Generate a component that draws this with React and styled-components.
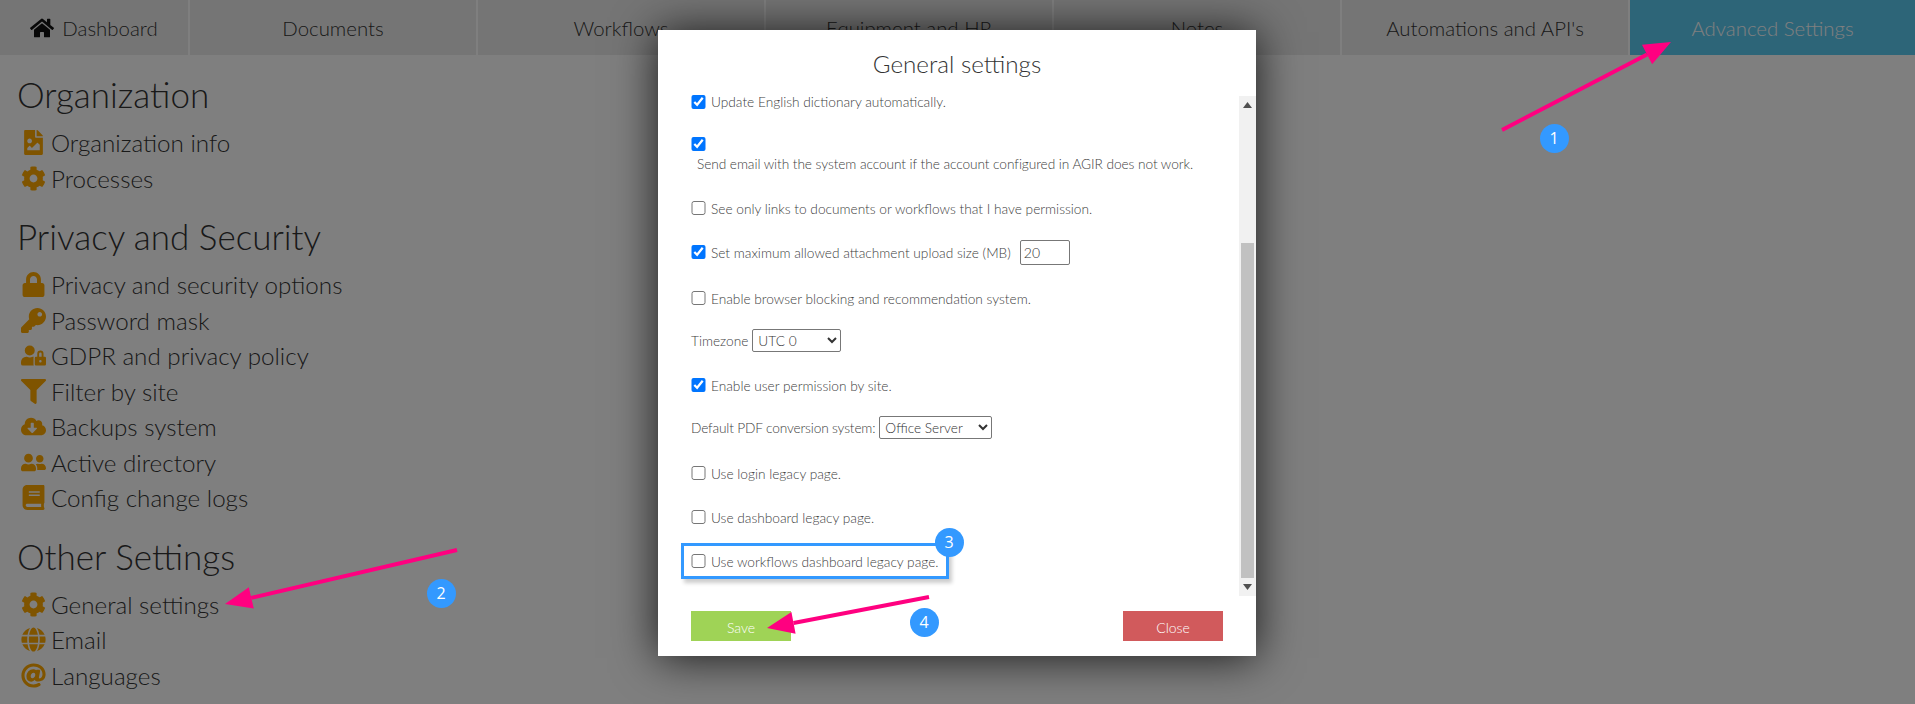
import React from "react";
import styled, { createGlobalStyle } from "styled-components";
import { FaHome, FaFileImage, FaCog, FaLock, FaKey, FaUserLock, FaFilter, FaCloudDownloadAlt, FaUserFriends, FaBook, FaGlobe, FaAt } from "react-icons/fa";

const Global = createGlobalStyle`
  html, body { margin: 0; padding: 0; background: #fff; }
  body { font-family: "Lato", "Open Sans", sans-serif; }
`;
const Page = styled.div`
  position: relative; width: 1915px; height: 704px; overflow: hidden; background: #fff; color: #3c3c3c;
`;
const Nav = styled.nav`
  display: grid; grid-template-columns: 188px repeat(5, 286px) 1fr; column-gap: 2px; height: 55px;
`;
const Tab = styled.a`
  display: flex; align-items: center; justify-content: center; gap: 8px;
  background: ${p => (p.$active ? "#5bcaf1" : "#ebebeb")};
  color: ${p => (p.$active ? "#fff" : "#333")};
  font-size: 20.4px; font-weight: 300;
  svg { font-size: 24px; color: #111; }
`;
const Content = styled.main`padding: 14px 0 0 17px;`;
const Section = styled.section`margin-bottom: 15px;`;
const Heading = styled.h2`
  margin: 0 0 6px; font-size: 35px; line-height: 50px; font-weight: 300; color: #333;
`;
const Item = styled.a`
  display: flex; align-items: center; height: 35.5px; font-size: 24.2px; font-weight: 300; color: #333;
`;
const ItemIcon = styled.span`
  display: flex; justify-content: center; width: 26px; margin: 0 5px 0 3px; color: #ffa800; font-size: 25px; flex: none;
`;
const Overlay = styled.div`position: absolute; inset: 0; background: rgba(0,0,0,.5);`;
const Modal = styled.div`
  position: absolute; left: 658px; top: 30px; width: 598px; height: 626px; background: #fff;
  box-shadow: 0 2px 42px rgba(0,0,0,.8); display: flex; flex-direction: column;
`;
const ModalTitle = styled.h3`
  margin: 0; height: 66px; display: flex; align-items: center; justify-content: center;
  font-size: 24.2px; font-weight: 300; color: #333;
`;
const ScrollArea = styled.div`display: flex; height: 500px;`;
const Viewport = styled.div`flex: 1; padding-left: 33px;`;
const Row = styled.div`
  display: flex; align-items: center; min-height: ${p => p.$h || 44}px;
  font-size: 13.7px; font-weight: 300; color: #404040; margin-top: ${p => p.$mt || 0}px;
  letter-spacing: ${p => p.$ls || 0}px;
`;
const Stack = styled.div`
  display: flex; flex-direction: column; align-items: flex-start; height: 63px; margin-top: 13px; padding-top: 14px; box-sizing: border-box;
  font-size: 13.7px; font-weight: 300; color: #404040; letter-spacing: -0.07px;
`;
const Check = styled.input.attrs({ type: "checkbox" })`
  width: 15px; height: 14px; margin: 0 5px 0 0; flex: none; accent-color: #0075ff;
`;
const Indented = styled.span`margin: 4px 0 0 6px;`;
const NumberField = styled.input`
  width: 50px; height: 25px; box-sizing: border-box; margin-left: 9px; border: 1px solid #777; border-radius: 2px;
  padding: 0 3px; font: 300 14px "Lato", sans-serif; color: #333;
`;
const Select = styled.select`
  width: ${p => p.$w}px; height: 23px; margin-left: 4px; border: 1px solid #777; border-radius: 2px; background: #fff;
  font: 300 13.7px "Lato", sans-serif; color: #333; padding: 0 1px;
`;
const Highlight = styled.div`
  display: flex; align-items: center; box-sizing: border-box; width: 268px; height: 36px; margin-left: -10px; padding-left: 7px;
  border: 3px solid #3399ff; box-shadow: 3px 4px 4px rgba(0,0,0,.2);
`;
const Scrollbar = styled.div`
  width: 17px; flex: none; background: #f1f1f1; display: flex; flex-direction: column; align-items: center;
`;
const ScrollBtn = styled.div`
  height: 17px; flex: none; display: flex; align-items: center; justify-content: center;
`;
const Thumb = styled.div`
  width: 13px; height: 335px; background: #c1c1c1; margin-top: ${p => p.$top}px;
`;
const Footer = styled.footer`
  display: flex; justify-content: space-between; padding: 15px 33px 0;
`;
const Btn = styled.button`
  width: 100px; height: 30px; border: 0; color: #fff; font: 300 14px "Lato", sans-serif;
  background: ${p => p.$bg}; padding: 3px 0 0;
`;
const Annotations = styled.svg`position: absolute; inset: 0; width: 1915px; height: 704px; pointer-events: none;`;
const Badge = styled.span`
  position: absolute; width: 29px; height: 29px; margin: -14.5px 0 0 -14.5px; border-radius: 50%; background: #3399ff; color: #fff;
  display: flex; align-items: center; justify-content: center; font: 400 16px "Open Sans", sans-serif;
`;

function Arrow({ x1, y1, x2, y2 }) {
  const a = Math.atan2(y2 - y1, x2 - x1);
  const len = 27, w = 11;
  const bx = x2 - Math.cos(a) * len, by = y2 - Math.sin(a) * len;
  const nx = -Math.sin(a) * w, ny = Math.cos(a) * w;
  return (
    <g>
      <line x1={x1} y1={y1} x2={bx} y2={by} stroke="#ff0080" strokeWidth="4" />
      <polygon points={`${x2},${y2} ${bx + nx},${by + ny} ${bx - nx},${by - ny}`} fill="#ff0080" />
    </g>
  );
}

const tabs = ["Documents", "Workflows", "Equipment and HR", "Notes", "Automations and API's"];
const sections = [
  { title: "Organization", items: [[FaFileImage, "Organization info"], [FaCog, "Processes"]] },
  { title: "Privacy and Security", items: [[FaLock, "Privacy and security options"], [FaKey, "Password mask"], [FaUserLock, "GDPR and privacy policy"], [FaFilter, "Filter by site"], [FaCloudDownloadAlt, "Backups system"], [FaUserFriends, "Active directory"], [FaBook, "Config change logs"]] },
  { title: "Other Settings", items: [[FaCog, "General settings"], [FaGlobe, "Email"], [FaAt, "Languages"]] },
];

export default function App() {
  return (
    <Page>
      <Global />
      <Nav>
        <Tab><FaHome />Dashboard</Tab>
        {tabs.map(t => <Tab key={t}>{t}</Tab>)}
        <Tab $active>Advanced Settings</Tab>
      </Nav>
      <Content>
        {sections.map(s => (
          <Section key={s.title}>
            <Heading>{s.title}</Heading>
            {s.items.map(([Icon, label]) => (
              <Item key={label}><ItemIcon><Icon /></ItemIcon>{label}</Item>
            ))}
          </Section>
        ))}
      </Content>
      <Overlay />
      <Modal>
        <ModalTitle>General settings</ModalTitle>
        <ScrollArea>
          <Viewport>
            <Row $h={12} $mt={-3}><Check defaultChecked />Update English dictionary automatically.</Row>
            <Stack><Check defaultChecked /><Indented>Send email with the system account if the account configured in AGIR does not work.</Indented></Stack>
            <Row><Check />See only links to documents or workflows that I have permission.</Row>
            <Row><Check defaultChecked />Set maximum allowed attachment upload size (MB)<NumberField defaultValue="20" /></Row>
            <Row $mt={2}><Check />Enable browser blocking and recommendation system.</Row>
            <Row $mt={-2}>Timezone<Select $w={89} defaultValue="UTC 0"><option>UTC 0</option></Select></Row>
            <Row $mt={1}><Check defaultChecked />Enable user permission by site.</Row>
            <Row $mt={-2} $ls={-0.16}>Default PDF conversion system:<Select $w={113} defaultValue="Office Server"><option>Office Server</option></Select></Row>
            <Row $mt={2}><Check />Use login legacy page.</Row>
            <Row><Check />Use dashboard legacy page.</Row>
            <Row><Highlight><Check />Use workflows dashboard legacy page.</Highlight></Row>
          </Viewport>
          <Scrollbar>
            <ScrollBtn><svg width="9" height="6" viewBox="0 0 9 6"><path d="M4.5 0 9 6H0z" fill="#505050" /></svg></ScrollBtn>
            <Thumb $top={130} />
            <ScrollBtn><svg width="9" height="6" viewBox="0 0 9 6"><path d="M4.5 6 9 0H0z" fill="#505050" /></svg></ScrollBtn>
          </Scrollbar>
        </ScrollArea>
        <Footer>
          <Btn $bg="#9fd356">Save</Btn>
          <Btn $bg="#d15a5c">Close</Btn>
        </Footer>
      </Modal>
      <Annotations>
        <Arrow x1={1502} y1={130} x2={1671} y2={42} />
        <Arrow x1={457} y1={550} x2={225} y2={604} />
        <Arrow x1={929} y1={597} x2={767} y2={628} />
      </Annotations>
      <Badge style={{ left: 1554, top: 138 }}>1</Badge>
      <Badge style={{ left: 441, top: 593 }}>2</Badge>
      <Badge style={{ left: 949, top: 542 }}>3</Badge>
      <Badge style={{ left: 924, top: 622 }}>4</Badge>
    </Page>
  );
}
